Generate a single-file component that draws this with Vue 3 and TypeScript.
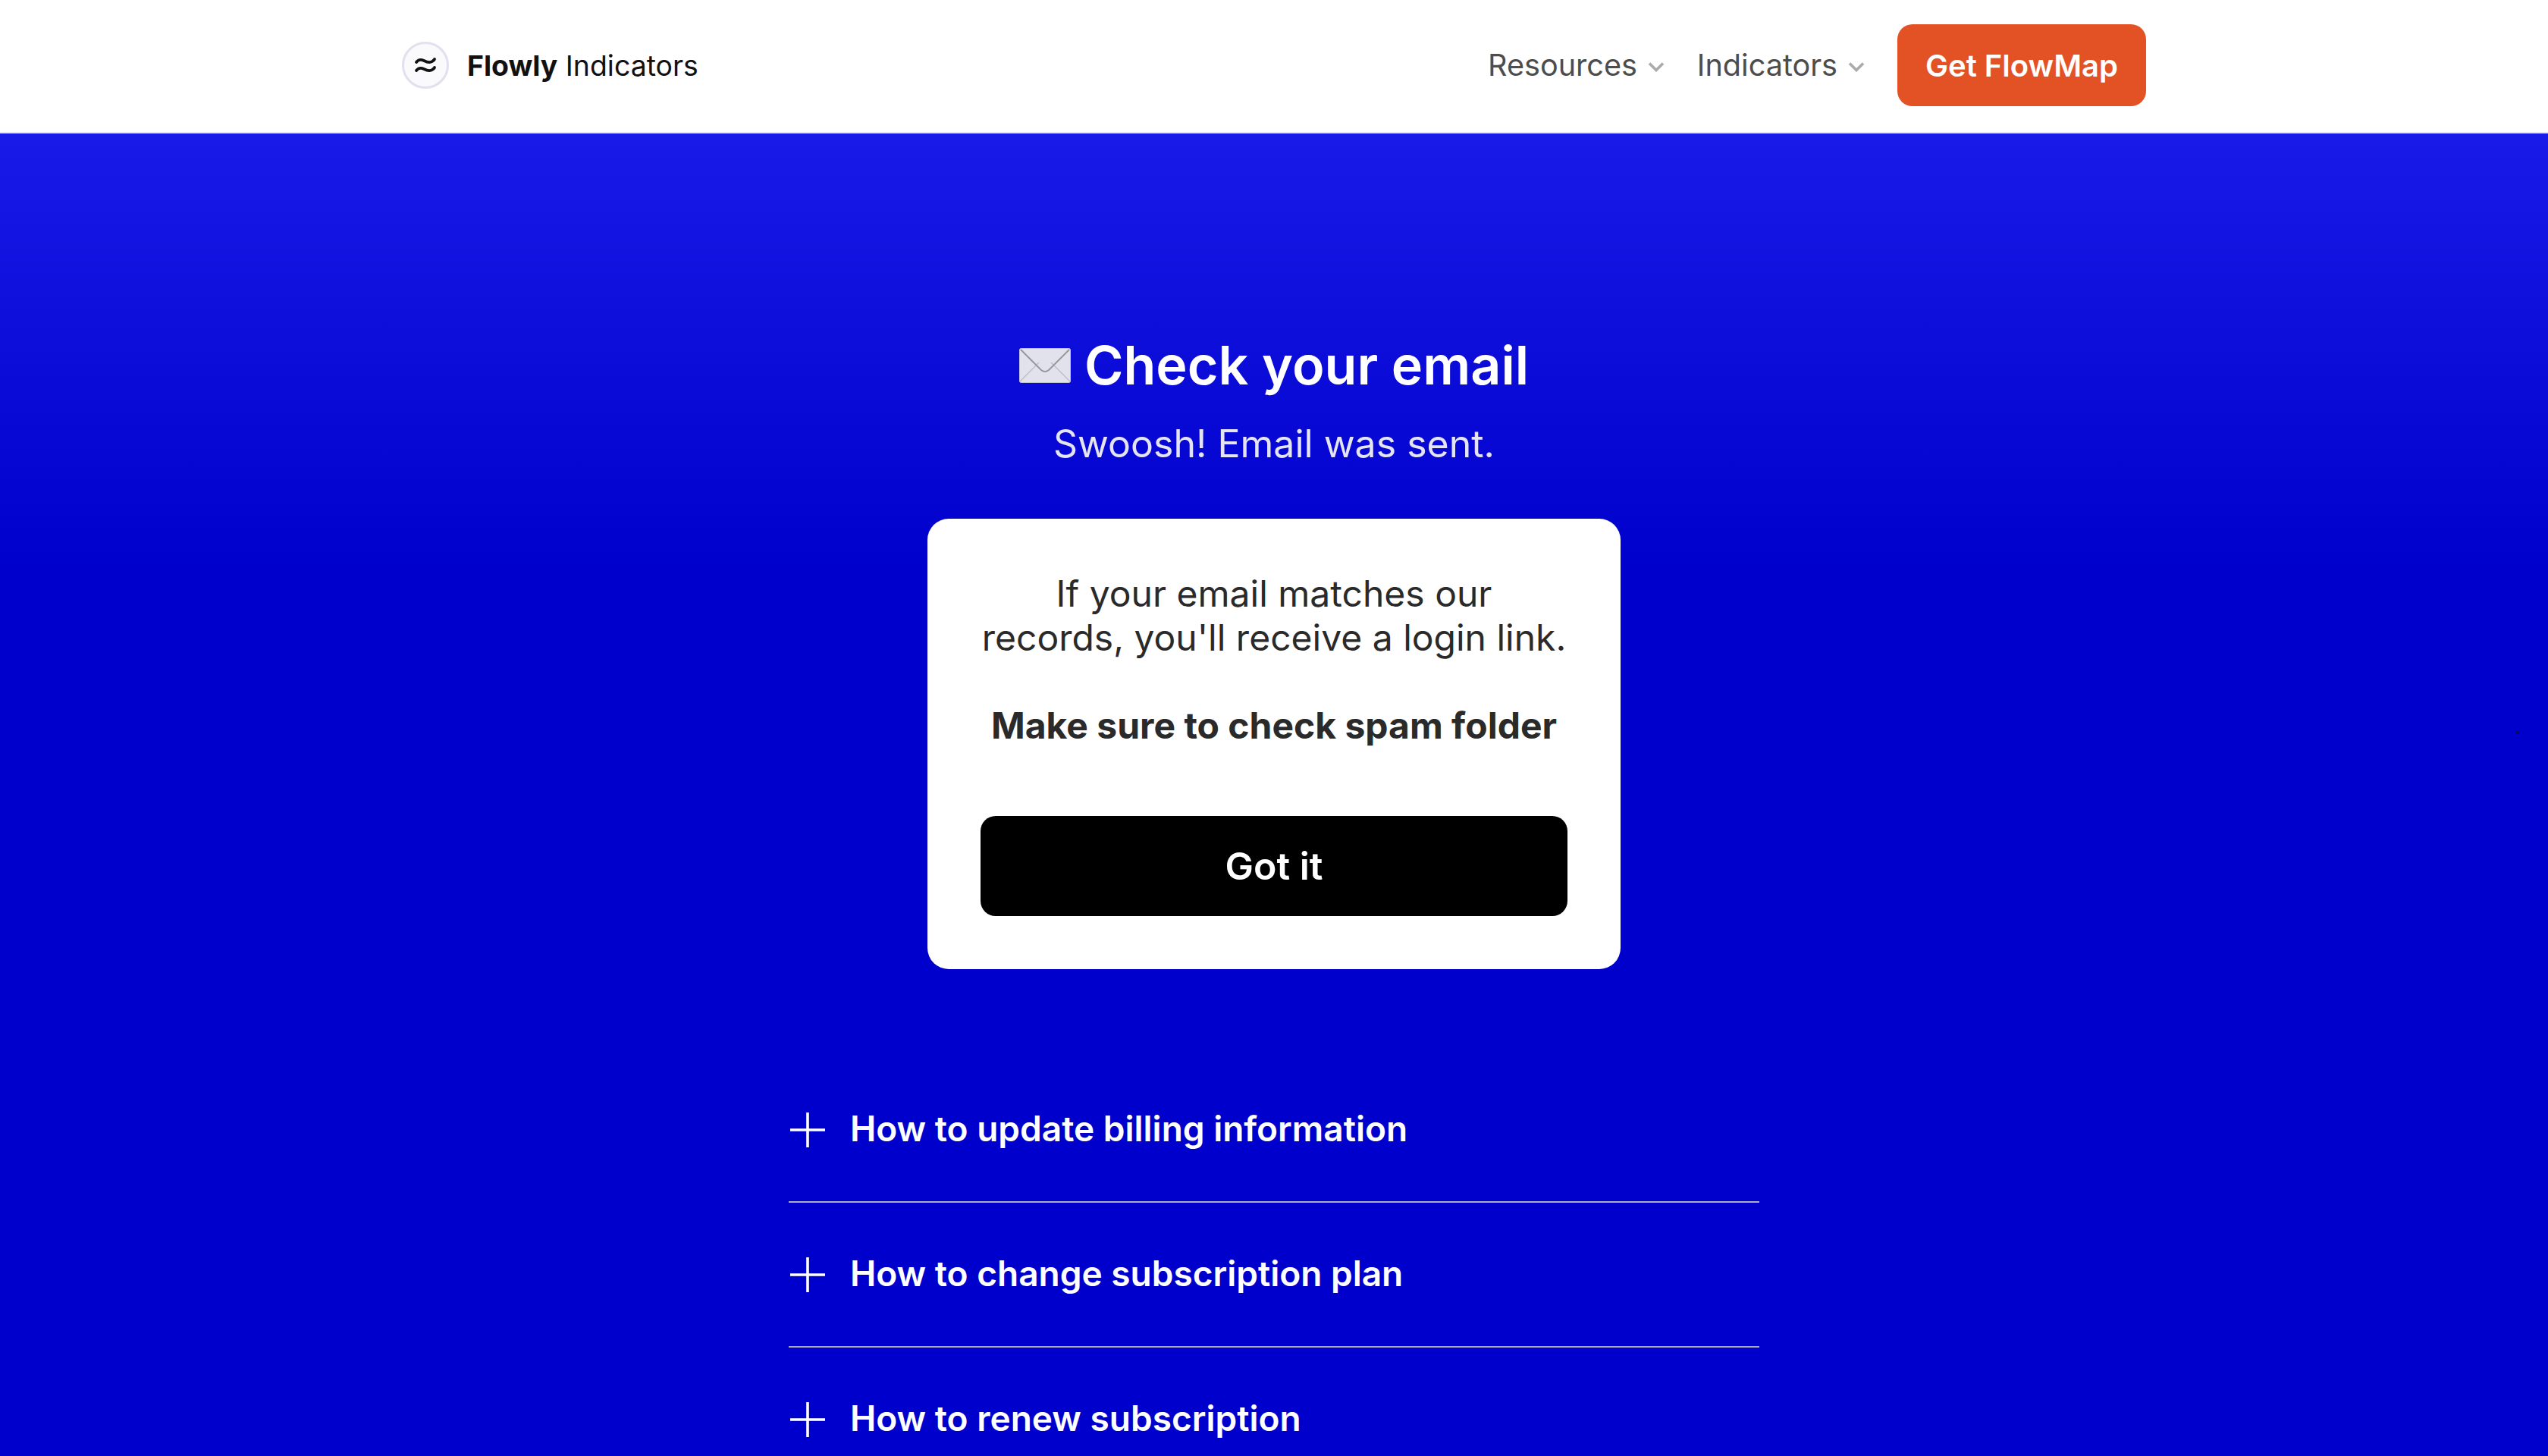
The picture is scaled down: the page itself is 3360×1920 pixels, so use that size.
<script setup lang="ts">
const navLinks = ['Resources', 'Indicators']
const faqs = [
  'How to update billing information',
  'How to change subscription plan',
  'How to renew subscription',
]
</script>

<template>
  <div class="page">
    <header class="nav">
      <div class="nav-inner">
        <a class="brand">
          <span class="logo">
            <svg width="30" height="24" viewBox="0 0 30 24" fill="none" stroke="#111" stroke-width="3.8" stroke-linecap="round">
              <path d="M3 8c3-4 6-4 10-2s8 3 11 1 3-3 3-3" />
              <path d="M3 19c3-4 6-4 10-2s8 3 11 1 3-3 3-3" />
            </svg>
          </span>
          <span class="brand-name"><b>Flowly</b> Indicators</span>
        </a>
        <nav class="links">
          <a v-for="link in navLinks" :key="link" class="link">
            {{ link }}
            <svg class="chev" width="22" height="14" viewBox="0 0 22 14" fill="none" stroke="#aaa" stroke-width="3.6">
              <path d="M2 2.5l9 9 9-9" />
            </svg>
          </a>
          <a class="cta">Get FlowMap</a>
        </nav>
      </div>
    </header>

    <main class="hero">
      <h1 class="title">
        <svg class="envelope" width="68" height="46" viewBox="0 0 68 46">
          <rect x="0.5" y="0.5" width="67" height="45" rx="2" fill="#e2e2ec" stroke="#c4c4cc" />
          <path d="M1 44l25-25M67 44L42 19" stroke="#bcbcc6" stroke-width="1.2" fill="none" />
          <path d="M2 2l27 27q5 4 10 0L66 2" stroke="#98989c" stroke-width="2" fill="none" />
        </svg>
        <span class="title-text">Check your email</span>
      </h1>
      <p class="sub">Swoosh! Email was sent.</p>

      <section class="card">
        <p class="msg">If your email matches our<br />records, you'll receive a login link.</p>
        <p class="msg strong">Make sure to check spam folder</p>
        <button class="got">Got it</button>
      </section>

      <ul class="faq">
        <li v-for="q in faqs" :key="q" class="faq-item">
          <svg class="plus" width="46" height="46" viewBox="0 0 46 46" stroke="#fff" stroke-width="3.6">
            <path d="M23 0v46M0 23h46" />
          </svg>
          <span class="faq-text">{{ q }}</span>
        </li>
      </ul>
    </main>
    <i class="speck"></i>
  </div>
</template>

<style>
html, body {
  margin: 0;
  background: #0000cc;
}
</style>

<style scoped>
.page {
  position: relative;
  height: 1920px;
  overflow: hidden;
  font-family: Inter, "Liberation Sans", sans-serif;
}

.nav {
  height: 176px;
  box-sizing: border-box;
  padding-bottom: 2px;
  border-bottom: 2px solid #e6e6f0;
  background: #fff;
}

.nav-inner {
  width: 2300px;
  height: 100%;
  margin: 0 auto;
  display: flex;
  align-items: center;
  justify-content: space-between;
}

.brand {
  display: flex;
  align-items: center;
  gap: 24px;
}

.logo {
  width: 62px;
  height: 62px;
  box-sizing: border-box;
  border: 3px solid #e2e0ee;
  border-radius: 50%;
  background: #fafafc;
  display: flex;
  align-items: center;
  justify-content: center;
}

.brand-name {
  font-size: 37.4px;
  color: #111;
}

.brand-name b {
  font-weight: 700;
}

.links {
  display: flex;
  align-items: center;
}

.link {
  display: flex;
  align-items: center;
  gap: 14px;
  margin-right: 43px;
  font-size: 39.6px;
  color: #4d4d4d;
}

.chev {
  margin-top: 4px;
}

.cta {
  width: 328px;
  height: 108px;
  border-radius: 20px;
  background: #e25225;
  color: #fff;
  font-size: 40px;
  font-weight: 600;
  display: flex;
  align-items: center;
  justify-content: center;
}

.hero {
  min-height: 1744px;
  background: linear-gradient(180deg, #1a1ae8 0, #0000cc 580px);
  display: flex;
  flex-direction: column;
  align-items: center;
  padding-top: 258px;
  box-sizing: border-box;
}

.title {
  margin: 0;
  display: flex;
  align-items: center;
  gap: 18px;
  height: 96px;
  font-size: 70px;
  font-weight: 600;
  color: #fff;
}

.title-text {
  padding-bottom: 2px;
}

.sub {
  margin: 0;
  padding-top: 25px;
  font-size: 50px;
  line-height: 60px;
  color: #e4e4f2;
}

.card {
  width: 914px;
  height: 594px;
  box-sizing: border-box;
  margin-top: 69px;
  padding: 70px;
  background: #fff;
  border-radius: 28px;
  text-align: center;
  display: flex;
  flex-direction: column;
}

.msg {
  margin: 0;
  font-size: 48px;
  line-height: 58px;
  color: #2a2a2a;
}

.strong {
  margin-top: 58px;
  font-weight: 700;
}

.got {
  margin-top: auto;
  height: 132px;
  border: 0;
  border-radius: 20px;
  background: #000;
  color: #fff;
  font-family: inherit;
  font-size: 50px;
  font-weight: 600;
}

.faq {
  list-style: none;
  width: 1280px;
  margin: 117px 0 0;
  padding: 0;
}

.faq-item {
  height: 191px;
  box-sizing: border-box;
  display: flex;
  align-items: center;
  gap: 33px;
  padding-left: 2px;
  border-bottom: 2px solid #b0b0bc;
  font-size: 46px;
  font-weight: 600;
  color: #fff;
}

.faq-text {
  padding-bottom: 3px;
}

.speck {
  position: absolute;
  left: 3318px;
  top: 964px;
  width: 4px;
  height: 4px;
  background: #0a0a60;
}
</style>
